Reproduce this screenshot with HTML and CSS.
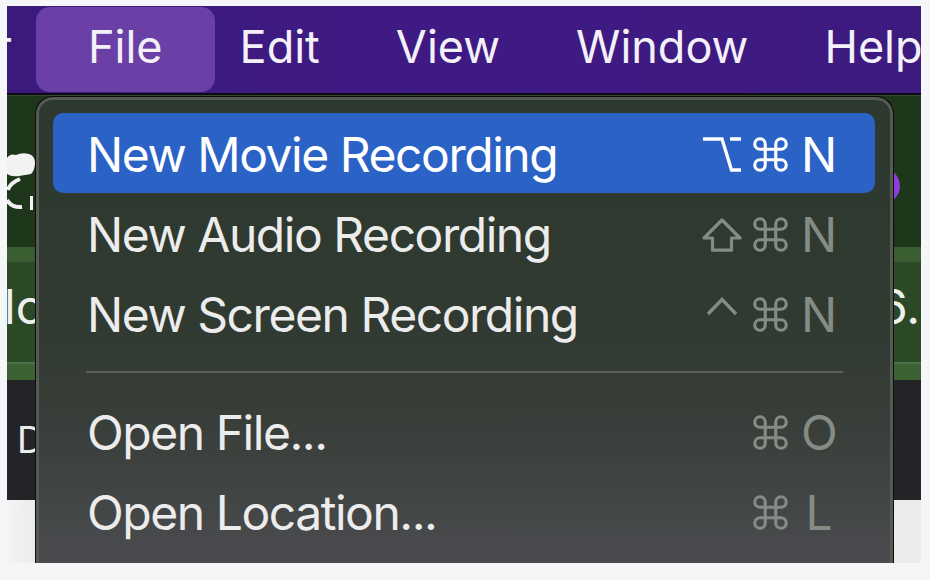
FILE: index.html
```html
<!DOCTYPE html>
<html lang="en">
<head>
<meta charset="utf-8">
<title>QuickTime Player – File menu</title>
<link rel="stylesheet" href="styles.css">
</head>
<body>
<div class="screen">
  <div class="menubar">
    <span class="app-tail">QuickTime Player</span>
    <span class="mb-item active">File</span>
    <span class="mb-item">Edit</span>
    <span class="mb-item">View</span>
    <span class="mb-item">Window</span>
    <span class="mb-item">Help</span>
  </div>

  <div class="desktop">
    <div class="band band-top">
      <svg class="logo" width="30" height="62" viewBox="0 0 30 62">
        <path d="M0 6 Q3 1 9 3 Q15 0 22 2 Q28 4 28 11 Q28 18 24 22 L12 24 Q4 25 0 22 Z" fill="#f2f2f2"/>
        <path d="M13 27 Q3 31 1 38" fill="none" stroke="#f2f2f2" stroke-width="4"/>
        <path d="M0 48 Q5 56 15 55" fill="none" stroke="#f2f2f2" stroke-width="4"/>
        <rect x="23" y="44" width="3" height="14" fill="#f2f2f2"/>
      </svg>
      <span class="dot"></span>
    </div>
    <div class="band band-light1"></div>
    <div class="band band-mid">
      <span class="frag frag-left">lc</span>
      <span class="frag frag-right">6.</span>
    </div>
    <div class="band band-light2"></div>
    <div class="band band-dark">
      <span class="frag-d">D</span>
    </div>
    <div class="band band-white"></div>
  </div>

  <div class="menu">
    <div class="row active">
      <span class="label">New Movie Recording</span>
      <span class="keys">
        <span class="mod mod1"><svg width="38" height="35" viewBox="0 0 38 35"><path d="M0 2H19L28.5 33H38M27 2H38" fill="none" stroke="currentColor" stroke-width="3.3"/></svg></span>
        <span class="mod mod2"><svg width="35" height="35" viewBox="2 2 20 20"><path d="M15 6v12a3 3 0 1 0 3-3H6a3 3 0 1 0 3 3V6a3 3 0 1 0-3 3h12a3 3 0 1 0-3-3" fill="none" stroke="currentColor" stroke-width="1.8"/></svg></span>
        <span class="key">N</span>
      </span>
    </div>
    <div class="row">
      <span class="label">New Audio Recording</span>
      <span class="keys">
        <span class="mod mod1"><svg width="40" height="34" viewBox="0 0 40 34"><path d="M20 2L38 20H29.5V32.2H10.5V20H2Z" fill="none" stroke="currentColor" stroke-width="3.2" stroke-linejoin="round"/></svg></span>
        <span class="mod mod2"><svg width="35" height="35" viewBox="2 2 20 20"><path d="M15 6v12a3 3 0 1 0 3-3H6a3 3 0 1 0 3 3V6a3 3 0 1 0-3 3h12a3 3 0 1 0-3-3" fill="none" stroke="currentColor" stroke-width="1.8"/></svg></span>
        <span class="key">N</span>
      </span>
    </div>
    <div class="row">
      <span class="label">New Screen Recording</span>
      <span class="keys">
        <span class="mod mod1"><svg class="ctrl" width="32" height="20" viewBox="0 0 32 20"><path d="M2 17L16 2.5L30 17" fill="none" stroke="currentColor" stroke-width="3.3"/></svg></span>
        <span class="mod mod2"><svg width="35" height="35" viewBox="2 2 20 20"><path d="M15 6v12a3 3 0 1 0 3-3H6a3 3 0 1 0 3 3V6a3 3 0 1 0-3 3h12a3 3 0 1 0-3-3" fill="none" stroke="currentColor" stroke-width="1.8"/></svg></span>
        <span class="key">N</span>
      </span>
    </div>
    <div class="sep"></div>
    <div class="row">
      <span class="label">Open File...</span>
      <span class="keys">
        <span class="mod mod2"><svg width="35" height="35" viewBox="2 2 20 20"><path d="M15 6v12a3 3 0 1 0 3-3H6a3 3 0 1 0 3 3V6a3 3 0 1 0-3 3h12a3 3 0 1 0-3-3" fill="none" stroke="currentColor" stroke-width="1.8"/></svg></span>
        <span class="key">O</span>
      </span>
    </div>
    <div class="row">
      <span class="label">Open Location...</span>
      <span class="keys">
        <span class="mod mod2"><svg width="35" height="35" viewBox="2 2 20 20"><path d="M15 6v12a3 3 0 1 0 3-3H6a3 3 0 1 0 3 3V6a3 3 0 1 0-3 3h12a3 3 0 1 0-3-3" fill="none" stroke="currentColor" stroke-width="1.8"/></svg></span>
        <span class="key">L</span>
      </span>
    </div>
  </div>
</div>
</body>
</html>
```
FILE: styles.css
```css
html, body {
  margin: 0;
  padding: 0;
}

body {
  background: #f5f6f8;
}

.screen {
  margin: 6px 0 0 7px;
  width: 914px;
  height: 557px;
  position: relative;
  overflow: hidden;
  font-family: Inter, "Noto Sans", sans-serif;
}

/* ---------- menu bar ---------- */
.menubar {
  height: 86px;
  padding-top: 1px;
  border-bottom: 2px solid #0f0b16;
  background: linear-gradient(90deg, #3c1a7c, #3f1a84 50%, #3d1a7e);
  display: flex;
  align-items: flex-start;
}

.app-tail,
.mb-item {
  flex: none;
  font-size: 45px;
  line-height: 80px;
  padding-bottom: 5px;
  color: #f3f0f8;
  white-space: nowrap;
}

.app-tail {
  width: 5px;
  overflow: hidden;
  direction: rtl;
}

.mb-item {
  margin-left: 76px;
}

.mb-item.active {
  margin-left: 24px;
  padding: 0 52px 5px;
  background: #6a40a6;
  border-radius: 14px;
}

.mb-item.active + .mb-item {
  margin-left: 25px;
}

/* ---------- desktop behind the menu ---------- */
.desktop {
  display: flex;
  flex-direction: column;
}

.band {
  display: flex;
  justify-content: space-between;
  align-items: flex-start;
}

.band-top {
  height: 152px;
  background: #1e3619;
  border-top: 1px solid #34492f;
  box-sizing: border-box;
}

.logo {
  margin-top: 56px;
}

.dot {
  width: 36px;
  height: 36px;
  border-radius: 50%;
  background: #8b3fd9;
  margin: 72px 21px 0 0;
}

.band-light1 {
  height: 15px;
  background: #3a5e31;
}

.band-mid {
  height: 100px;
  background: #2b4926;
  padding-top: 21px;
  box-sizing: border-box;
}

.frag {
  font-size: 48px;
  line-height: 48px;
  color: #eef0ec;
}

.frag-left {
  margin-left: -3px;
}

.frag-right {
  margin-right: 1px;
}

.band-light2 {
  height: 18px;
  background: #3c6133;
  border-top: 2px solid #4d7142;
  box-sizing: border-box;
}

.band-dark {
  height: 120px;
  background: #232427;
  padding-top: 41px;
  box-sizing: border-box;
}

.frag-d {
  font-size: 37px;
  line-height: 37px;
  color: #ececec;
  margin-left: 10px;
}

.band-white {
  height: 63px;
  background: linear-gradient(90deg, #f4f4f4, #ebebeb 30px, #ececec);
}

/* ---------- dropdown menu ---------- */
.menu {
  position: absolute;
  left: 28px;
  top: 90px;
  width: 859px;
  height: 500px;
  box-sizing: border-box;
  border: 1px solid #0c0d0c;
  border-bottom: none;
  border-radius: 18px 18px 0 0;
  background: linear-gradient(180deg, #2d382e 0%, #303a31 45%, #383e39 65%, #4a4b4f 93%, #4d4e52 100%);
  box-shadow: inset 0 0 0 3px #555a55;
  padding: 16px 18px 0 17px;
}

.row {
  display: flex;
  justify-content: space-between;
  align-items: baseline;
  height: 80px;
  box-sizing: border-box;
  padding: 3px 38px 0 34px;
  font-size: 48px;
  line-height: 77px;
  color: #ececec;
  border-radius: 10px;
}

.label {
  letter-spacing: -1.45px;
  white-space: nowrap;
}

.row.active {
  background: #2a62c6;
  color: #ffffff;
}

.keys {
  display: flex;
  align-items: baseline;
  color: #858c86;
}

.row.active .keys {
  color: #ffffff;
}

.mod {
  display: inline-block;
  text-align: center;
}

.mod1 {
  width: 40px;
  margin-right: 11px;
}

.mod2 {
  width: 35px;
  margin-right: 13px;
}

.mod svg {
  vertical-align: baseline;
}

.mod svg.ctrl {
  vertical-align: 15px;
}

.key {
  width: 36px;
  text-align: center;
}

.sep {
  height: 2px;
  background: #5a605a;
  margin: 18px 32px 18px 33px;
}
```
